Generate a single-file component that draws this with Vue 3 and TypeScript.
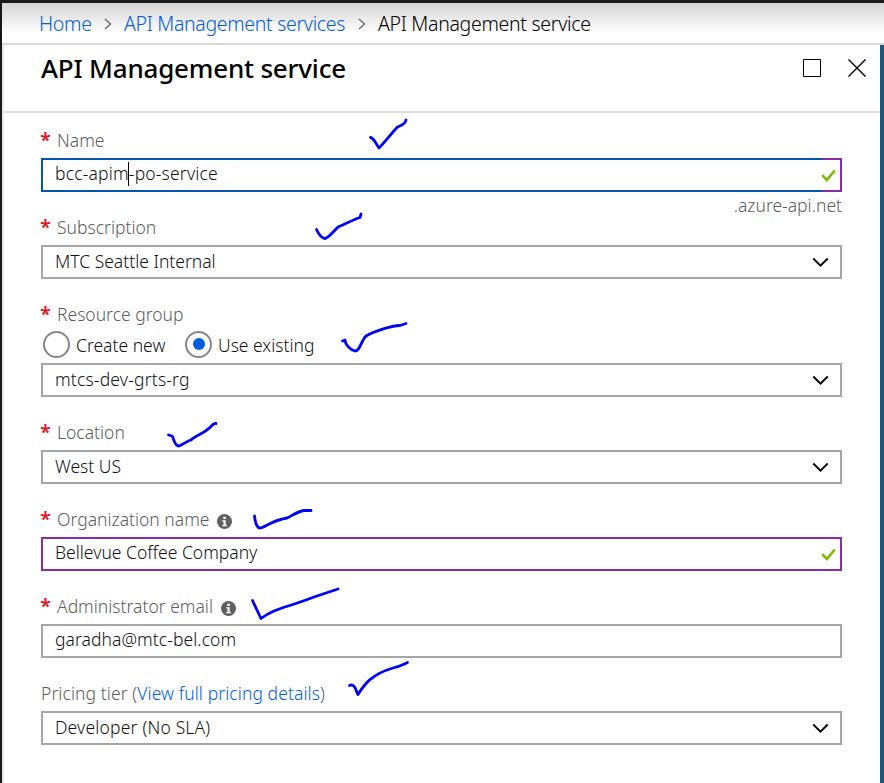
<script setup lang="ts">
interface Field {
  id: string
  label: string
  value: string
  required: boolean
  info?: boolean
  dropdown?: boolean
  valid?: boolean
  state?: 'focused' | 'edited'
}

const fields: Field[] = [
  { id: 'name', label: 'Name', value: 'bcc-apim-po-service', required: true, valid: true, state: 'focused' },
  { id: 'subscription', label: 'Subscription', value: 'MTC Seattle Internal', required: true, dropdown: true },
  { id: 'group', label: 'Resource group', value: 'mtcs-dev-grts-rg', required: true, dropdown: true },
  { id: 'location', label: 'Location', value: 'West US', required: true, dropdown: true },
  { id: 'organization', label: 'Organization name', value: 'Bellevue Coffee Company', required: true, info: true, valid: true, state: 'edited' },
  { id: 'email', label: 'Administrator email', value: 'garadha@mtc-bel.com', required: true, info: true },
  { id: 'tier', label: 'Pricing tier', value: 'Developer (No SLA)', required: false, dropdown: true },
]

const inkStrokes: string[] = [
  'M370.5 137.5C374 138 376 144 379 148C384 143 391 134 397 127.500C401 125 405 125 406 120',
  'M316.500 229.500C319 235 321 238 325 238.500C329 238 334 230 339 226.500C346 224 352 220 360 217.500L361 214',
  'M342.500 341L345 340C345 344 350 350 355 351C360 351 361 341 366 336C374 331 391 326 400 325.500L406 323.500',
  'M168.500 435L172 436C174 438 174 446 179 446C184 444 187 441 191 440C195 436 204 433 208 429C211 427 213 423 216 423.500',
  'M254.500 516C255 521 256 526 259 528C264 529 269 521 287 518C293 515 299 511 304 510.500L311 510.500',
  'M252.500 600.500L261 618.500C275 608 286 608 314 597L338 589',
  'M349.500 685.500C355 683 356 691 358 694.500C363 687 369 675 393 668C401 666 402 665 407.500 662.500',
]
</script>

<template>
  <div class="shell">
    <nav class="breadcrumb">
      <a class="crumb home">Home</a>
      <svg class="separator" viewBox="0 0 8 12"><path d="M1 1l5.500 5L1 11" /></svg>
      <a class="crumb services">API Management services</a>
      <svg class="separator" viewBox="0 0 8 12"><path d="M1 1l5.500 5L1 11" /></svg>
      <span class="crumb current">API Management service</span>
    </nav>

    <main class="blade">
      <header class="blade-header">
        <h1>API Management service</h1>
        <svg class="maximize" viewBox="0 0 18 18"><path d="M.5.5h17v17H.5z" /></svg>
        <svg class="close" viewBox="0 0 18 18"><path d="M.5.5l17 17M17.500.5l-17 17" /></svg>
      </header>

      <form class="form" @submit.prevent>
        <section v-for="field in fields" :key="field.id" class="field" :class="field.id">
          <div class="label-row" :class="{ optional: !field.required }">
            <span v-if="field.required" class="asterisk">*</span>
            <label class="label">{{ field.label }}<template v-if="field.id === 'tier'"> (<a>View full pricing details</a>)</template></label>
            <svg v-if="field.info" class="info" viewBox="0 0 15 15">
              <circle cx="7.5" cy="7.500" r="7.500" />
              <path d="M6.300 2.700h2.500v2.200H6.300zM5.200 6.200h3.500v4.800h1.200v1.300H5.200V11h1.300V7.500H5.200z" />
            </svg>
          </div>
          <div v-if="field.id === 'group'" class="radios">
            <span class="radio"></span><span class="radio-label create">Create new</span>
            <span class="radio selected"></span><span class="radio-label existing">Use existing</span>
          </div>
          <div class="box" :class="field.state">
            <span v-if="field.state === 'focused'" class="value">bcc-apim<i class="caret"></i>-po-service</span>
            <span v-else class="value">{{ field.value }}</span>
            <svg v-if="field.dropdown" class="chevron" viewBox="0 0 17 11"><path d="M1.300 1.500l7.200 7.200 7.200-7.200" /></svg>
            <svg v-if="field.valid" class="valid" viewBox="0 0 15 13"><path d="M1.200 6.200l4.700 4.800L13.700 1.500" /></svg>
          </div>
          <div v-if="field.id === 'name'" class="hint"><span>.azure-api.net</span></div>
        </section>
      </form>
    </main>

    <svg class="ink" viewBox="0 0 884 783">
      <path v-for="(stroke, index) in inkStrokes" :key="index" :d="stroke" />
    </svg>
  </div>
</template>

<style>
body {
  margin: 0;
  background: #fff;
}
</style>

<style scoped>
* {
  box-sizing: border-box;
}
.shell {
  position: relative;
  width: 884px;
  height: 783px;
  overflow: hidden;
  border-top: 3px solid #1b1a1b;
  border-left: 2px solid #171819;
  font-family: "Noto Sans", "Open Sans", sans-serif;
  font-size: 17.5px;
  font-weight: 350;
  letter-spacing: 0;
  color: #111;
}
svg {
  display: block;
  flex: none;
  fill: none;
}
.breadcrumb {
  display: flex;
  align-items: center;
  height: 42px;
  padding: 2px 0 0 37px;
  border-bottom: 2px solid #d8d8d8;
  background: linear-gradient(#d5d5d5, #e2e2e2 25%, #fff 75%);
  font-size: 19.5px;
  white-space: nowrap;
}
.crumb {
  line-height: 26px;
}
.home {
  width: 52px;
  letter-spacing: -0.3px;
}
.services {
  width: 221px;
  letter-spacing: -0.32px;
}
.current {
  color: #000;
  letter-spacing: -0.3px;
}
a {
  color: #015cda;
}
.separator {
  width: 8px;
  height: 12px;
  margin: 0 12px 0 13px;
  stroke: #666;
  stroke-width: 1.3;
}
.blade {
  height: 738px;
  border-left: 2px solid #e8e8e8;
  border-right: 4px solid #205678;
}
.blade-header {
  display: flex;
  align-items: center;
  height: 68px;
  padding: 0 14px 20px 37px;
  border-bottom: 2px solid #dcdcdc;
}
h1 {
  margin: 0 auto 0 0;
  font-size: 26px;
  font-weight: 500;
  line-height: 34px;
  color: #000;
  letter-spacing: -0.2px;
  white-space: nowrap;
}
.maximize,
.close {
  width: 18px;
  height: 18px;
  stroke: #000;
}
.maximize {
  margin-right: 27px;
}
.close {
  stroke-width: 1.4;
}
.form {
  padding: 11px 38px 0 37px;
}
.field {
  margin-bottom: 19px;
}
.field.name {
  margin-bottom: 0;
}
.label-row {
  display: flex;
  align-items: center;
  height: 34px;
  padding-bottom: 2px;
  color: #5c5c5c;
  white-space: nowrap;
}
.optional {
  letter-spacing: 0.08px;
}
.asterisk {
  width: 16px;
  color: #e81123;
  font-size: 20px;
  font-weight: 600;
  line-height: 32px;
  text-indent: -1px;
}
.info {
  width: 15px;
  height: 15px;
  margin: 4px 0 0 8px;
}
.info circle {
  fill: #606060;
}
.info path {
  fill: #fff;
}
.box {
  position: relative;
  display: flex;
  align-items: center;
  height: 34px;
  padding: 0 11px 2px 12px;
  border: 2px solid #a6a6a6;
  white-space: nowrap;
}
.box.edited,
.box.focused {
  border-color: #8a2da5;
  padding-right: 4px;
}
.box.focused::before {
  content: "";
  position: absolute;
  inset: -2px 18px -2px -2px;
  border: 2px solid #0058ad;
  border-right: 0;
}
.value {
  margin-right: auto;
}
.name .value,
.group .value,
.tier .value {
  letter-spacing: 0.18px;
}
.email .value {
  letter-spacing: 0.06px;
}
.name .value,
.organization .value,
.email .value {
  padding-bottom: 2px;
}
.caret {
  display: inline-block;
  width: 1px;
  height: 24px;
  margin: 0 0 0 -1px;
  vertical-align: -6px;
  background: #000;
}
.chevron {
  width: 17px;
  height: 11px;
  margin-top: 3px;
  stroke: #000;
  stroke-width: 1.9;
}
.valid {
  width: 15px;
  height: 13px;
  margin-top: 3px;
  stroke: #7fba00;
  stroke-width: 2.6;
}
.hint {
  display: flex;
  justify-content: flex-end;
  height: 19px;
  line-height: 26px;
  color: #5c5c5c;
}
.radios {
  display: flex;
  align-items: center;
  height: 31px;
  padding: 0 0 7px 2px;
}
.radio {
  display: flex;
  align-items: center;
  justify-content: center;
  width: 27px;
  height: 27px;
  border: 2px solid #858585;
  border-radius: 50%;
}
.radio.selected::after {
  content: "";
  width: 12px;
  height: 12px;
  border-radius: 50%;
  background: #015cda;
}
.radio-label {
  padding: 2px 0 0 6px;
  white-space: nowrap;
}
.create {
  width: 115px;
}
.ink {
  position: absolute;
  top: -3px;
  left: -2px;
  width: 884px;
  height: 783px;
  pointer-events: none;
  stroke: #0000f5;
  stroke-width: 2.8;
  stroke-linecap: round;
  stroke-linejoin: round;
}
</style>
